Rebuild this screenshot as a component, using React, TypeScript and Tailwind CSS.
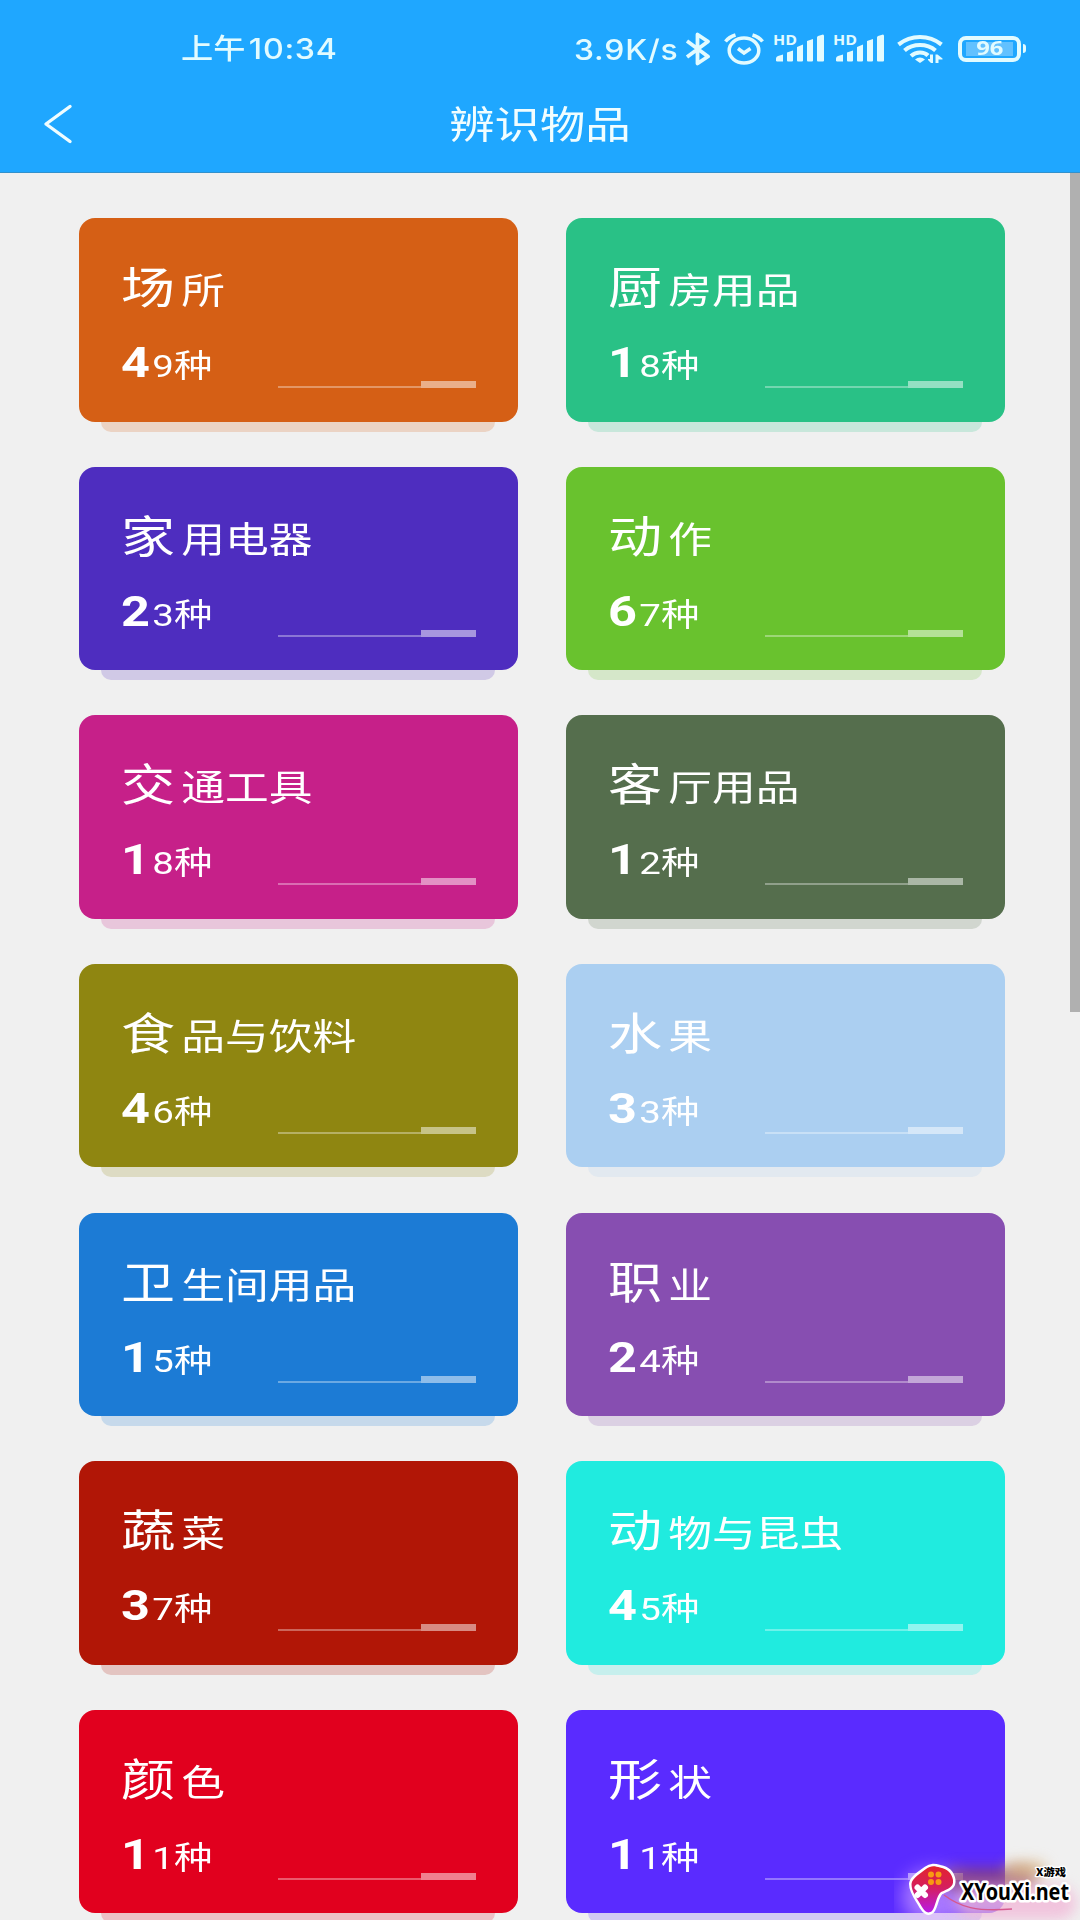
import React from "react";

type Category = { name: string; count: string; color: string; shadow: string };

const categories: Category[] = [
  { name: "场所", count: "49", color: "bg-[#d55f15]", shadow: "bg-[#d55f15]/20" },
  { name: "厨房用品", count: "18", color: "bg-[#29c186]", shadow: "bg-[#29c186]/20" },
  { name: "家用电器", count: "23", color: "bg-[#4e2dbf]", shadow: "bg-[#4e2dbf]/20" },
  { name: "动作", count: "67", color: "bg-[#69c22e]", shadow: "bg-[#69c22e]/20" },
  { name: "交通工具", count: "18", color: "bg-[#c62089]", shadow: "bg-[#c62089]/20" },
  { name: "客厅用品", count: "12", color: "bg-[#556e4d]", shadow: "bg-[#556e4d]/20" },
  { name: "食品与饮料", count: "46", color: "bg-[#8f8611]", shadow: "bg-[#8f8611]/20" },
  { name: "水果", count: "33", color: "bg-[#abcff1]", shadow: "bg-[#abcff1]/20" },
  { name: "卫生间用品", count: "15", color: "bg-[#1c7bd5]", shadow: "bg-[#1c7bd5]/20" },
  { name: "职业", count: "24", color: "bg-[#874eb1]", shadow: "bg-[#874eb1]/20" },
  { name: "蔬菜", count: "37", color: "bg-[#b11606]", shadow: "bg-[#b11606]/20" },
  { name: "动物与昆虫", count: "45", color: "bg-[#20ebdf]", shadow: "bg-[#20ebdf]/20" },
  { name: "颜色", count: "11", color: "bg-[#e1001e]", shadow: "bg-[#e1001e]/20" },
  { name: "形状", count: "11", color: "bg-[#5a2bff]", shadow: "bg-[#5a2bff]/20" },
];

function Card({ name, count, color, shadow }: Category) {
  return (
    <div className="relative h-[203.5px]">
      <div className={`absolute left-[22px] right-[23px] -bottom-[10px] h-[10px] rounded-b-[12px] ${shadow}`} />
      <div className={`relative h-full rounded-[16px] text-white ${color}`}>
        <div className="flex h-full flex-col pl-[42px] pt-[39px]">
          <div className="-ml-[0.5px] flex h-[64px] origin-left scale-x-[1.215] items-baseline whitespace-nowrap leading-[64px]">
            <span className="text-[44.5px]">{name[0]}</span>
            <span className="ml-[5px] text-[36px]">{name.slice(1)}</span>
          </div>
          <div className="-ml-[0.5px] mt-[14px] flex h-[56px] origin-left scale-x-[1.2] items-baseline whitespace-nowrap leading-[56px]">
            <span className="text-[42px] font-bold">{count[0]}</span>
            <span className="ml-[2px] text-[32px]">{count.slice(1)}种</span>
          </div>
        </div>
        <div className="absolute bottom-[33.500px] right-[42px] flex w-[198px] items-end">
          <div className="h-[2px] flex-1 bg-white/35" />
          <div className="h-[7px] w-[55px] bg-white/50" />
        </div>
      </div>
    </div>
  );
}

function Signal() {
  return (
    <svg width="50" height="36" viewBox="0 -6 50 36" fill="currentColor" className="mb-[6px] shrink-0">
      <text x="-1" y="10.500" fontSize="14" fontWeight="700" textLength="24" lengthAdjust="spacingAndGlyphs" fontFamily="Open Sans, sans-serif">HD</text>
      <path d="M2 27V24.500Q2 22.500 4 22L9 20.500V27.500H3ZM13 18.500L19 16.500V26.500Q19 27.500 18 27.500H14Q13 27.500 13 26.500ZM23 13L29 10.500V26.500Q29 27.500 28 27.500H24Q23 27.500 23 26.500ZM33 7L39 5V26.500Q39 27.500 38 27.500H34Q33 27.500 33 26.500ZM43 3.500Q43 2.500 44 2L49 .5Q50 .5 50 2V26.500Q50 27.500 49 27.500H44Q43 27.500 43 26.500Z" />
    </svg>
  );
}

function StatusBar() {
  return (
    <div className="relative flex h-[97px] items-center text-[#e2fbff]">
      <div className="ml-[181px] flex w-[393px] items-center pt-[2px]">
        <div className="flex origin-left scale-x-[1.15] items-baseline whitespace-nowrap text-[28px] leading-[40px]">
          <span className="font-medium">上午</span>
          <span className="ml-[3px] font-['Inter'] text-[28px] font-medium tracking-[0.6px]">10:34</span>
        </div>
      </div>
      <div className="w-[111px] pt-[2px]">
        <span className="block w-[90px] origin-left scale-x-[1.14] whitespace-nowrap font-['Inter'] text-[28px] font-medium leading-[40px] tracking-[0.7px]">3.9K/s</span>
      </div>
      <svg width="26" height="34" viewBox="0 0 26 34" fill="none" stroke="currentColor" strokeWidth="3.800" strokeLinejoin="round" className="shrink-0">
        <path d="M2 9L23 24.500L12.500 31.500V2.500L23 9.500L2 25" />
      </svg>
      <svg width="40" height="32" viewBox="0 0 40 32" fill="none" stroke="currentColor" strokeWidth="3.500" className="ml-[13px] shrink-0">
        <ellipse cx="20" cy="17.500" rx="14.800" ry="12.500" />
        <path d="M1.500 8.500Q5 4 11.500 2M28.500 2Q35 4 38.500 8.500M14 15.500L20 20L26.500 15.500" />
      </svg>
      <div className="ml-[10px] flex gap-[10px] pt-px">
        <Signal />
        <Signal />
      </div>
      <svg width="47" height="30" viewBox="0 0 47 30" fill="none" stroke="currentColor" strokeWidth="4.200" className="ml-[13px] shrink-0">
        <path d="M1.500 10.500Q11 3 23 3Q35 3 44.500 10.500M7.500 16.500Q14 11 23 11Q32 11 38.500 16.500M14 22Q18 18.500 23 18.500Q28 18.500 31 21.500" />
        <path d="M23 29L18 25.500Q23 21.500 28 25.500Z" fill="currentColor" stroke="none" />
        <path d="M36 20.500V29H34L31 26V25H33V20.500ZM38.500 29V20.500H40.500L45.500 24.500V25.500H41.500V29Z" fill="currentColor" stroke="none" />
      </svg>
      <div className="ml-[14px] flex items-center">
        <div className="flex h-[26px] w-[63px] items-center justify-center rounded-[8px] border-4 border-current">
          <div className="flex h-[14px] w-[47px] items-center justify-center bg-white/30">
            <span className="scale-x-[1.25] font-['Open_Sans'] text-[19px] font-bold leading-none">96</span>
          </div>
        </div>
        <div className="ml-[2px] h-[9px] w-[3px] rounded-r bg-current" />
      </div>
    </div>
  );
}

function Watermark() {
  return (
    <div className="absolute bottom-0 right-0 h-[84px] w-[186px] overflow-hidden">
      <div className="absolute left-[8px] top-[34px] h-[54px] w-[66px] rounded-full bg-[#e9b8ff]/55 blur-[9px]" />
      <div className="absolute left-[50px] top-[32px] h-[24px] w-[92px] rounded-full bg-[#94485f]/70 blur-[7px]" />
      <div className="absolute left-[112px] top-[26px] h-[16px] w-[40px] rounded-full bg-[#d8b178]/70 blur-[7px]" />
      <div className="absolute left-[62px] top-[50px] h-[34px] w-[120px] rounded-full bg-[#f1b9d8]/80 blur-[7px]" />
      <svg width="186" height="84" viewBox="0 0 186 84" className="absolute inset-0">
        <defs>
          <linearGradient id="pad" x1="0" y1="0" x2="0" y2="1">
            <stop offset="0" stopColor="#e3232d" />
            <stop offset="0.45" stopColor="#d51f5c" />
            <stop offset="1" stopColor="#b81be6" />
          </linearGradient>
        </defs>
        <path d="M50 59C66 71 82 76 118 73" fill="none" stroke="#d6588f" strokeWidth="1.500" />
        <path d="M32 33C37 29 41 30 46 31.500C54 33 58 38 59 44C60 51 54 53 47 56C42 60 42 70 38 75C34 78 31 76 28 71C23 62 17.500 56 17.500 48C18 42 27 37 32 33Z" fill="url(#pad)" stroke="white" strokeWidth="5" paintOrder="stroke" strokeLinejoin="round" />
        <g fill="#f89a13">
          <circle cx="37" cy="38.500" r="3" /><circle cx="44.500" cy="38.500" r="3" />
          <circle cx="37" cy="46" r="3" /><circle cx="44.500" cy="46" r="3" />
        </g>
        <path d="M23.500 51.500L31 59M31 51.500L23.500 59" stroke="white" strokeWidth="6" strokeLinecap="round" />
        <text x="67" y="63.500" fontFamily="Noto Sans" fontWeight="700" fontSize="23.500" textLength="108" lengthAdjust="spacingAndGlyphs" fill="#000" stroke="#fff" strokeWidth="5" strokeLinejoin="round" paintOrder="stroke">XYouXi.net</text>
        <text x="142" y="39.500" fontFamily="Noto Sans CJK SC" fontWeight="900" fontSize="10.500" textLength="30" lengthAdjust="spacingAndGlyphs" fill="#000" stroke="#fff" strokeWidth="2.500" strokeLinejoin="round" paintOrder="stroke">X游戏</text>
      </svg>
    </div>
  );
}

export default function App() {
  return (
    <div className="relative h-[1920px] w-[1080px] overflow-hidden bg-[#f0f0f0] font-['Roboto','Noto_Sans_CJK_SC',sans-serif]">
      <header className="h-[173px] border-b border-[#3291cc] bg-[#1fa7ff]">
        <StatusBar />
        <div className="relative flex h-[56px] items-center justify-center text-[#f0fdff]">
          <svg width="30" height="40" viewBox="0 0 30 40" fill="none" stroke="currentColor" strokeWidth="3.400" strokeLinecap="round" strokeLinejoin="round" className="absolute left-[43px] top-[7px]">
            <path d="M27 2.500L3 20L27 37.500" />
          </svg>
          <h1 className="scale-x-[1.21] text-[37.5px] leading-[56px]">辨识物品</h1>
        </div>
      </header>
      <main className="flex justify-between">
        <div className="ml-[79px] mt-[45px] grid w-[926px] grid-cols-2 gap-x-[48px] gap-y-[45.17px]">
          {categories.map((c) => (
            <Card key={c.name} {...c} />
          ))}
        </div>
        <div className="h-[839px] w-[10px] bg-[#b0b0b0]" />
      </main>
      <Watermark />
    </div>
  );
}
